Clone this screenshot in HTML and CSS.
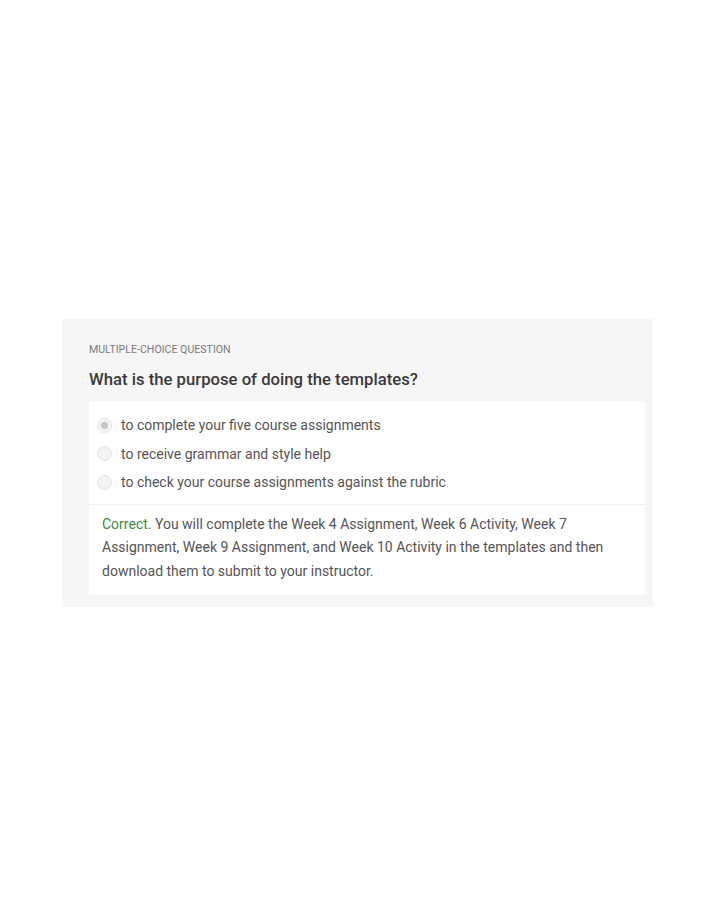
FILE: index.html
```html
<!DOCTYPE html>
<html>
<head>
<meta charset="utf-8">
<link rel="stylesheet" href="styles.css">
</head>
<body>
<div class="page">
  <div class="card">
    <div class="label">MULTIPLE-CHOICE QUESTION</div>
    <div class="title">What is the purpose of doing the templates?</div>
    <div class="panel">
      <div class="options">
        <div class="option"><span class="radio selected"></span><span>to complete your five course assignments</span></div>
        <div class="option"><span class="radio"></span><span>to receive grammar and style help</span></div>
        <div class="option"><span class="radio"></span><span>to check your course assignments against the rubric</span></div>
      </div>
      <p class="feedback"><span class="correct">Correct.</span> You will complete the Week 4 Assignment, Week 6 Activity, Week 7 Assignment, Week 9 Assignment, and Week 10 Activity in the templates and then download them to submit to your instructor.</p>
    </div>
  </div>
</div>
</body>
</html>
```
FILE: styles.css
```css
html, body {
  margin: 0;
  padding: 0;
  background: #ffffff;
}
.page {
  width: 714px;
  height: 918px;
  padding-top: 319px;
  box-sizing: border-box;
  font-family: Roboto, "Liberation Sans", sans-serif;
}
.card {
  margin-left: 62px;
  width: 591px;
  box-sizing: border-box;
  background: #f6f6f6;
  padding: 24px 8px 12px 27px;
}
.label {
  font-size: 10.6px;
  line-height: 14px;
  color: #7a7a7a;
}
.title {
  margin-top: 12px;
  font-size: 16.7px;
  line-height: 22px;
  font-weight: 500;
  color: #3a3a3a;
}
.panel {
  margin-top: 10px;
  background: #ffffff;
}
.options {
  padding: 10px 0 7px 8px;
  border-bottom: 1px solid #f0f0f0;
}
.option {
  display: flex;
  align-items: center;
  gap: 9px;
  height: 28.5px;
  font-size: 14px;
  color: #555555;
}
.radio {
  width: 15px;
  height: 15px;
  border-radius: 50%;
  border: 1px solid #e4e4e4;
  background: #f4f4f4;
  box-sizing: border-box;
  display: flex;
  align-items: center;
  justify-content: center;
  flex: none;
}
.radio.selected::after {
  content: "";
  width: 7px;
  height: 7px;
  border-radius: 50%;
  background: #c4c4c4;
}
.feedback {
  margin: 0;
  padding: 8px 30px 12px 13px;
  font-size: 14px;
  line-height: 23.5px;
  color: #555555;
}
.correct {
  color: #3f8a3f;
}
```
